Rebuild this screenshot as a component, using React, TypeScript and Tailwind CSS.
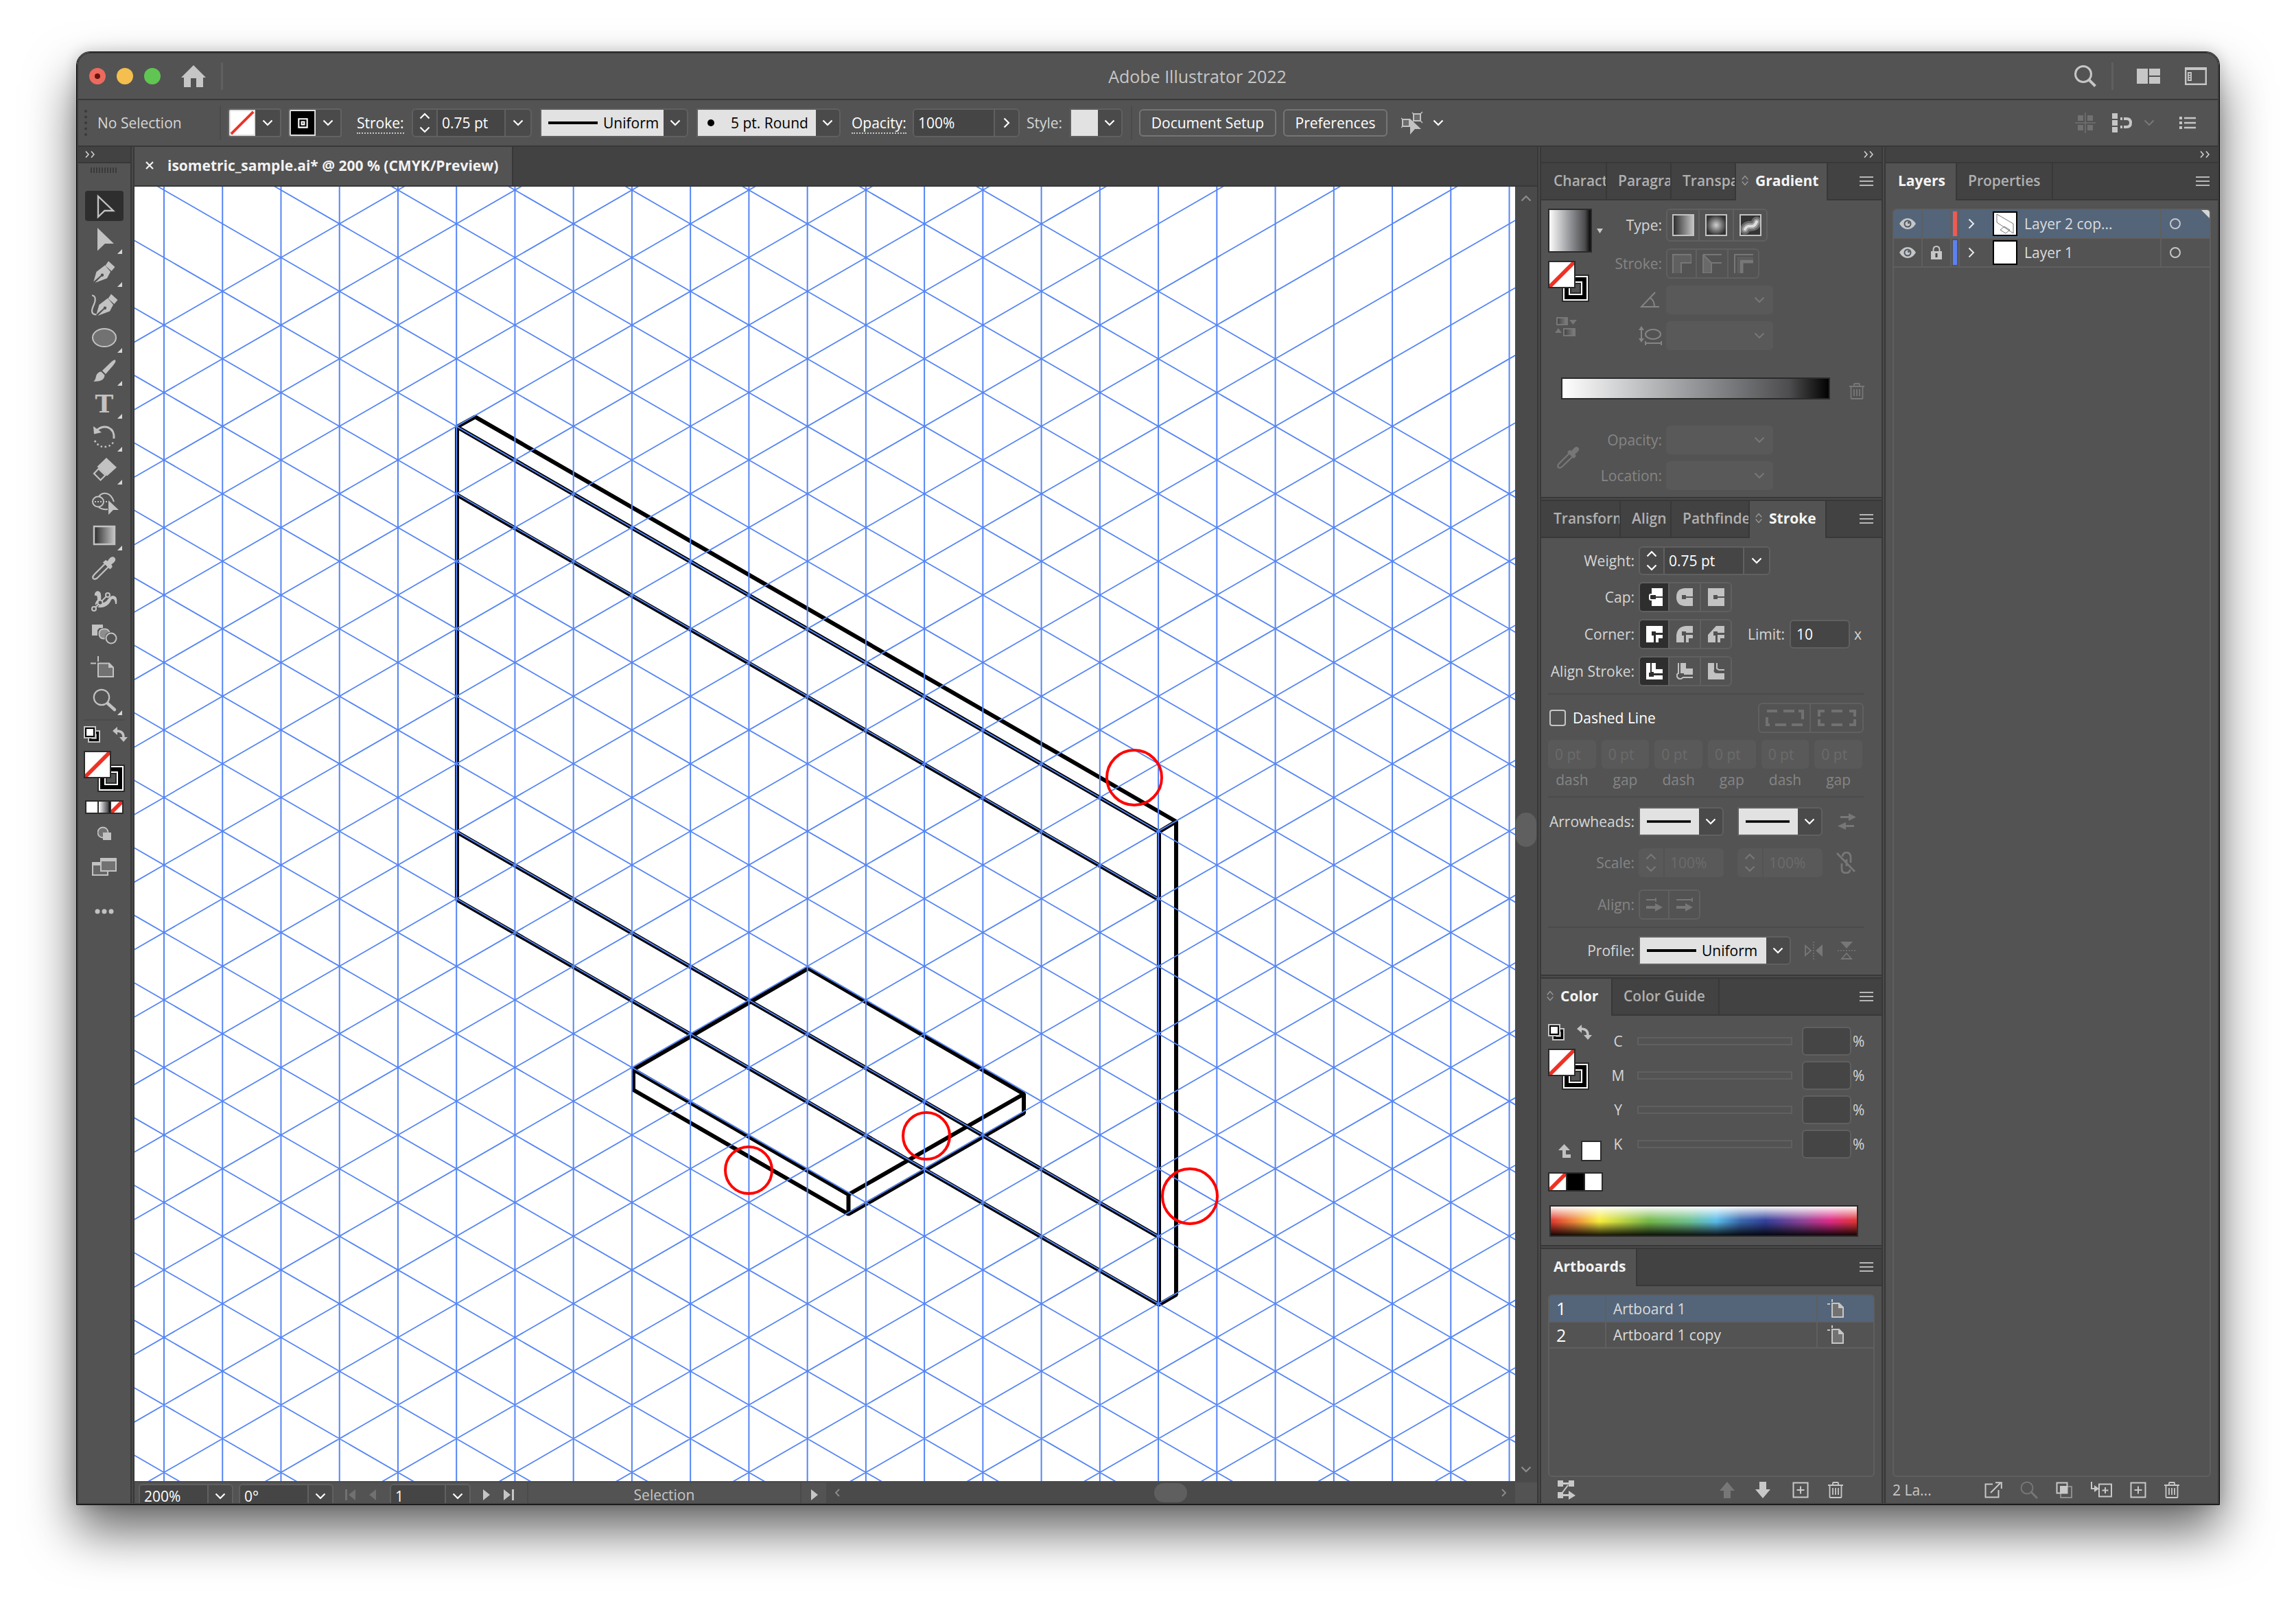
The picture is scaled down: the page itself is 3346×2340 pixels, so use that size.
import type { ReactNode } from "react";
import clsx from "clsx";

type IconProps = { className: string; box: string; children: ReactNode };

function Icon({ className, box, children }: IconProps) {
  return (
    <svg viewBox={box} className={clsx("shrink-0", className)} fill="none" aria-hidden="true">
      {children}
    </svg>
  );
}

function Chevron({ className = "text-white" }: { className?: string }) {
  return (
    <Icon box="0 0 16 10" className={clsx("h-[10px] w-4", className)}>
      <path d="M1.5 1.5 8 8l6.500-6.500" stroke="currentColor" strokeWidth="2.2" />
    </Icon>
  );
}

function ChevronUp({ className = "text-white" }: { className?: string }) {
  return (
    <Icon box="0 0 16 10" className={clsx("h-[10px] w-4", className)}>
      <path d="M1.500 8.500 8 2l6.500 6.500" stroke="currentColor" strokeWidth="2.200" />
    </Icon>
  );
}

function DoubleChevron() {
  return (
    <Icon box="0 0 14 10" className="h-[10px] w-[14px] text-[#d0d0d0]">
      <path d="m1 .5 4 4.500-4 4.500M9 .5 13 5 9 9.500" stroke="currentColor" strokeWidth="1.600" />
    </Icon>
  );
}

function MenuIcon() {
  return (
    <button type="button" aria-label="Panel menu" className="text-[#b8b8b8]">
      <Icon box="0 0 20 14" className="h-[14px] w-5">
        <path d="M0 1h20M0 7h20M0 13h20" stroke="currentColor" strokeWidth="2" />
      </Icon>
    </button>
  );
}

function TrashIcon({ className }: { className: string }) {
  return (
    <Icon box="0 0 22 24" className={clsx("h-6 w-[22px]", className)}>
      <path d="M0 5h22M7 5V2q0-1 1-1h6q1 0 1 1v3M2.500 6v16q0 1 1 1h15q1 0 1-1V6M7 9v10M11 9v10M15 9v10" stroke="currentColor" strokeWidth="1.800" />
    </Icon>
  );
}

function PlusIcon() {
  return (
    <Icon box="0 0 24 24" className="size-6 text-[#c8c8c8]">
      <path d="M1.500 1.500h21v21h-21zM12 6.500v11M6.500 12h11" stroke="currentColor" strokeWidth="2" />
    </Icon>
  );
}

function DropperIcon({ className }: { className: string }) {
  return (
    <Icon box="0 0 34 34" className={className}>
      <path d="M19 10.500 4 25.500Q1 29 3 31t6-1.500L24 15" stroke="currentColor" strokeWidth="2.200" />
      <path d="m17 9 2.500-2.500 3 1.500C26 3 29 .5 31.500 2.500s0 5.500-5 9l1.500 3-2.500 2.500Z" fill="currentColor" stroke="currentColor" strokeWidth="1.500" />
    </Icon>
  );
}

function Nib() {
  return (
    <>
      <path d="M4 35.500 8.500 20 21 10.500l8 9.500-5 9.500-17.500 6.500 8.500-8.500" fill="currentColor" />
      <path d="m26 4.500 9.500 8.500-5 6-9-8z" fill="currentColor" />
      <path d="M4.500 35.500 16 25.500" stroke="#535353" strokeWidth="2" />
      <circle cx="17" cy="24.800" r="2.200" fill="#535353" />
    </>
  );
}

/* No-fill swatch over a black stroke swatch */
function FillStroke() {
  return (
    <Icon box="0 0 60 60" className="size-[60px]">
      <path d="M20 20h40v40H20z" fill="#2b2b2b" />
      <path d="M22 22h36v36H22z" fill="#fff" />
      <path d="M24 24h32v32H24z" fill="#000" />
      <path d="M30 30h20v20H30z" fill="#fff" />
      <path d="M32 32h16v16H32z" fill="#2b2b2b" />
      <path d="M34 34h12v12H34z" fill="#535353" />
      <path d="M0 0h40v40H0z" fill="#2b2b2b" />
      <path d="M2 2h36v36H2z" fill="#fff" />
      <path d="M2 38v-4L34 2h4v4L6 38z" fill="#ee3124" />
    </Icon>
  );
}

function DefaultSwap() {
  return (
    <div className="flex justify-between">
      <button type="button" aria-label="Default fill and stroke">
        <Icon box="0 0 24 24" className="size-6">
          <path d="M6 6h18v18H6z" fill="#c6c6c6" />
          <path d="M8 8h14v14H8z" fill="#000" />
          <path d="M12 12h6v6h-6z" fill="#535353" stroke="#c6c6c6" strokeWidth="1.500" />
          <path d="M0 0h18v18H0z" fill="#c6c6c6" />
          <path d="M2 2h14v14H2z" fill="#000" />
          <path d="M4 4h10v10H4z" fill="#fff" />
        </Icon>
      </button>
      <button type="button" aria-label="Swap fill and stroke">
        <Icon box="0 0 22 22" className="size-[22px] text-[#c2c2c2]">
          <path d="M6 6q10 0 10 9" stroke="currentColor" strokeWidth="3.500" />
          <path d="M0 6 7 0v12zM16 22l-6-7h12z" fill="currentColor" />
        </Icon>
      </button>
    </div>
  );
}

function RoundSwatch({ kind }: { kind: "none" | "stroke" }) {
  return (
    <div className="flex h-[42px] overflow-hidden rounded border-2 border-[#636363]">
      <Icon box="0 0 40 40" className="h-full w-[38px]">
        <path d="M0 0h40v40H0z" fill="#e0e0e0" />
        {kind === "none" ? (
          <>
            <path d="M2 2h36v36H2z" fill="#fff" />
            <path d="M3 37 37 3" stroke="#ee3124" strokeWidth="4" />
          </>
        ) : (
          <>
            <path d="M2 2h36v36H2z" fill="#000" />
            <path d="M14 14h13v13H14zM18.500 18.500h4v4h-4z" stroke="#fff" strokeWidth="2.200" />
          </>
        )}
      </Icon>
      <button type="button" aria-label={kind === "none" ? "Fill color" : "Stroke color"} className="flex w-9 items-center justify-center bg-[#4a4a4a]">
        <Chevron />
      </button>
    </div>
  );
}

function NumberField({ id, label, value, className }: { id: string; label?: string; value: string; className: string }) {
  return (
    <div className={clsx("flex h-[42px] overflow-hidden rounded-md border-2 border-[#606060] bg-[#4a4a4a]", className)}>
      <button type="button" aria-label="Step value" className="flex w-[34px] shrink-0 flex-col items-center justify-center gap-[10px]">
        <ChevronUp />
        <Chevron />
      </button>
      <input id={id} aria-label={label} defaultValue={value} className="w-full min-w-0 border-x-2 border-[#606060] bg-[#454545] pl-[6px] text-white" />
      <button type="button" aria-label="Presets" className="flex w-9 shrink-0 items-center justify-center">
        <Chevron />
      </button>
    </div>
  );
}

function LineSelect({ id, label, text, className }: { id: string; label: string; text?: string; className: string }) {
  return (
    <div className={clsx("flex h-[42px] overflow-hidden rounded-md rounded-l-none border-2 border-[#606060] bg-[#4a4a4a]", className)}>
      <div className="flex flex-1 items-center bg-[#e2e2e2] pl-[10px] text-black">
        {text === "5 pt. Round" ? (
          <Icon box="0 0 10 10" className="mr-6 ml-1 size-[10px]">
            <circle cx="5" cy="5" r="5" fill="#000" />
          </Icon>
        ) : (
          <Icon box="0 0 72 4" className={clsx("h-1", text ? "mr-2 w-[72px]" : "w-16")}>
            <path d="M0 0h72v4H0z" fill="#000" />
          </Icon>
        )}
        <select id={id} aria-label={label} className={clsx("appearance-none bg-transparent", text ? "flex-1" : "w-2")}>
          <option>{text ?? ""}</option>
        </select>
      </div>
      <span className="flex w-[34px] shrink-0 items-center justify-center">
        <Chevron />
      </span>
    </div>
  );
}

function DisabledSelect({ id }: { id: string }) {
  return (
    <div className="relative h-[42px] w-[156px] rounded-md bg-[#595959]">
      <select id={id} disabled className="size-full appearance-none" />
      <Chevron className="pointer-events-none absolute top-4 right-3 text-[#777]" />
    </div>
  );
}

function Segments({ children }: { children: ReactNode }) {
  return <div className="flex divide-x-2 divide-[#606060] overflow-hidden rounded-md border-2 border-[#606060]">{children}</div>;
}

function Segment({ label, active, wide, children }: { label: string; active?: boolean; wide?: boolean; children: ReactNode }) {
  return (
    <button
      type="button"
      aria-label={label}
      aria-pressed={active}
      className={clsx(
        "flex h-10 items-center justify-center",
        wide ? "w-[75px]" : "w-[46px] first:w-[43px] last:w-[43px]",
        active ? "bg-[#2e2e2e] text-white" : wide ? "text-[#717171]" : "text-[#c2c2c2]",
      )}
    >
      {children}
    </button>
  );
}

type Tab = { name: string; width: string; active?: boolean; updown?: boolean };

function TabBar({ tabs }: { tabs: Tab[] }) {
  return (
    <div role="tablist" className="flex h-[54px] shrink-0 bg-[#424242]">
      {tabs.map((tab) => (
        <button
          key={tab.name}
          type="button"
          role="tab"
          aria-selected={Boolean(tab.active)}
          className={clsx(
            "flex shrink-0 items-center overflow-hidden whitespace-nowrap border-r-2 border-[#383838]",
            tab.width,
            tab.updown ? "gap-[10px] pl-2" : "pl-4 first:pl-[18px]",
            tab.active ? "bg-[#535353] pb-1 font-bold text-[#f4f4f4]" : "border-b-2 pb-[2px] font-semibold text-[#b0b0b0]",
          )}
        >
          {tab.updown ? (
            <Icon box="0 0 10 16" className="h-4 w-[10px] text-[#9a9a9a]">
              <path d="m.7 6.500 4.300-5 4.300 5M.7 9.500l4.300 5 4.300-5" stroke="currentColor" strokeWidth="1.300" />
            </Icon>
          ) : null}
          {tab.name}
        </button>
      ))}
      <div className="flex flex-1 items-center justify-end border-b-2 border-[#383838] pr-3">
        <MenuIcon />
      </div>
    </div>
  );
}

function Gutter() {
  return <div className="w-[6px] shrink-0 border-x-2 border-[#383838] bg-[#4a4a4a]" />;
}

function RowGutter() {
  return <div className="h-[6px] shrink-0 border-y-2 border-[#383838] bg-[#4a4a4a]" />;
}

function DockHeader() {
  return (
    <div className="flex h-6 shrink-0 items-center justify-end border-b-2 border-[#383838] bg-[#424242] pr-3">
      <DoubleChevron />
    </div>
  );
}

function TitleBar() {
  return (
    <header className="relative flex h-[68px] shrink-0 items-center border-b-2 border-[#383838] px-4 text-[#c6c6c6]">
      <div className="flex gap-4">
        <button type="button" aria-label="Close" className="flex size-6 items-center justify-center rounded-full bg-[#ec6a5e]">
          <span className="size-2 rounded-full bg-[#6b120c]" />
        </button>
        <button type="button" aria-label="Minimize" className="size-6 rounded-full bg-[#f4bf4f]" />
        <button type="button" aria-label="Zoom" className="size-6 rounded-full bg-[#61c554]" />
      </div>
      <button type="button" aria-label="Home" className="ml-[30px]">
        <Icon box="0 0 36 32" className="h-8 w-9">
          <path d="M18 0 36 18H32v14H22V19h-8v13H4V18H0z" fill="currentColor" />
        </Icon>
      </button>
      <div className="ml-[22px] h-10 w-[3px] bg-[#5f5f5f]" />
      <h1 className="absolute inset-x-0 pl-36 text-center text-[25px] font-medium">Adobe Illustrator 2022</h1>
      <div className="relative ml-auto flex items-center">
        <button type="button" aria-label="Search">
          <Icon box="0 0 32 32" className="size-8">
            <circle cx="13" cy="13" r="11.500" stroke="currentColor" strokeWidth="3" />
            <path d="m21 21 9.500 9.500" stroke="currentColor" strokeWidth="4" />
          </Icon>
        </button>
        <div className="ml-[22px] h-10 w-[3px] bg-[#5f5f5f]" />
        <button type="button" aria-label="Arrange documents" className="ml-[34px]">
          <Icon box="0 0 34 22" className="h-[22px] w-[34px]">
            <path d="M0 0h16v22H0zM18 0h16v10H18zM18 12h16v10H18z" fill="currentColor" />
          </Icon>
        </button>
        <button type="button" aria-label="Workspace" className="ml-9">
          <Icon box="0 0 32 26" className="h-[26px] w-8">
            <path d="M1.200 1.200h29.600v23.600H1.200z" stroke="currentColor" strokeWidth="2.400" />
            <path d="M0 0h32v4H0zM4 7h6v13H4z" fill="currentColor" />
            <path d="M7 9v2M7 12.500v2M7 16v2" stroke="#535353" strokeWidth="2.500" />
          </Icon>
        </button>
      </div>
    </header>
  );
}

function ControlBar() {
  return (
    <div className="flex h-[68px] shrink-0 items-center border-b-2 border-[#383838] pr-8 pl-[9px] text-[#d6d6d6]">
      <div className="h-[38px] border-l-4 border-dotted border-[#3a3a3a]" />
      <span className="ml-[15px] w-[178px]">No Selection</span>
      <div className="mr-[10px] h-[50px] w-[2px] bg-[#4b4b4b]" />
      <RoundSwatch kind="none" />
      <div className="w-[10px]" />
      <RoundSwatch kind="stroke" />
      <label htmlFor="stroke-weight" className="mx-2 ml-[22px] w-[72px] text-white">
        <span className="border-b-2 border-dotted border-[#c6c6c6]">Stroke:</span>
      </label>
      <NumberField id="stroke-weight" value="0.75 pt" className="w-[175px]" />
      <LineSelect id="profile" label="Width profile" text="Uniform" className="ml-3 w-[216px]" />
      <LineSelect id="brush" label="Brush" text="5 pt. Round" className="ml-3 w-[210px]" />
      <label htmlFor="opacity" className="ml-4 w-[89px] text-white">
        <span className="border-b-2 border-dotted border-[#c6c6c6]">Opacity:</span>
      </label>
      <div className="flex h-[42px] w-[156px] overflow-hidden rounded-md border-2 border-[#606060] bg-[#4a4a4a]">
        <input id="opacity" defaultValue="100%" className="w-full min-w-0 border-r-2 border-[#606060] bg-[#454545] pl-[6px] text-white" />
        <button type="button" aria-label="Opacity slider" className="flex w-[34px] shrink-0 items-center justify-center">
          <Icon box="0 0 10 16" className="h-4 w-[10px]">
            <path d="M1.500 1.500 8 8l-6.500 6.500" stroke="#fff" strokeWidth="2.200" />
          </Icon>
        </button>
      </div>
      <span className="ml-[10px] w-[63px]">Style:</span>
      <div className="flex h-[42px] w-[77px] overflow-hidden rounded-md rounded-l-none border-2 border-[#606060] bg-[#4a4a4a]">
        <span className="flex-1 bg-[#e2e2e2]" />
        <button type="button" aria-label="Graphic styles" className="flex w-[34px] items-center justify-center">
          <Chevron />
        </button>
      </div>
      <div className="mr-[10px] ml-3 h-[50px] w-[2px] bg-[#4b4b4b]" />
      <button type="button" className="h-10 w-[200px] rounded-md border-2 border-[#757575] text-white">
        Document Setup
      </button>
      <button type="button" className="ml-[10px] h-10 w-[152px] rounded-md border-2 border-[#757575] text-white">
        Preferences
      </button>
      <button type="button" aria-label="Select similar objects" className="ml-5 flex items-center gap-[14px] text-[#c2c2c2]">
        <Icon box="0 0 32 34" className="h-[34px] w-8">
          <path d="M2 12h10v10H2zM18 4h10v10H18z" stroke="currentColor" strokeWidth="2" fill="#6c6c6c" />
          <path d="m0 10 3 3M0 24l3-3M16 2l3 3M31 1l-3 3M16 16l3-3M31 17l-3-3" stroke="currentColor" strokeWidth="1.500" />
          <path d="m13 11 16 15h-9l-7 8z" fill="currentColor" />
        </Icon>
        <Chevron />
      </button>
      <div className="ml-auto flex items-center text-[#c6c6c6]">
        <Icon box="0 0 30 30" className="size-[30px] text-[#717171]">
          <path d="M4 4h8v8H4zM18 4h8v8h-8zM4 18h8v8H4zM18 18h8v8h-8z" fill="currentColor" />
          <path d="M15 0v30M0 15h30" stroke="currentColor" strokeWidth="1.500" />
        </Icon>
        <Icon box="0 0 30 28" className="ml-6 h-7 w-[30px]">
          <path d="M0 0h8v8H0zM0 10h8v8H0zM0 20h8v8H0z" fill="currentColor" />
          <path d="M17 8h4q6 0 6 6t-6 6h-4" stroke="currentColor" strokeWidth="4" />
          <path d="M12 6h3v4h-3zM12 18h3v4h-3z" fill="currentColor" />
        </Icon>
        <div className="w-4" />
        <Chevron className="text-[#777]" />
        <Icon box="0 0 24 18" className="ml-9 h-[18px] w-6">
          <path d="M7 2h17M7 9h17M7 16h17" stroke="currentColor" strokeWidth="2.400" />
          <path d="M0 0h4v4H0zM0 7h4v4H0zM0 14h4v4H0z" fill="currentColor" />
        </Icon>
      </div>
    </div>
  );
}

type Tool = { name: string; flyout?: boolean; art: ReactNode };

const tools: Tool[] = [
  { name: "Selection", art: <path d="m11 6 22 21H20.500L11 36z" stroke="currentColor" strokeWidth="2.400" /> },
  { name: "Direct selection", flyout: true, art: <path d="m10 4 24 23H21L10 37.500z" fill="currentColor" /> },
  { name: "Pen", flyout: true, art: <Nib /> },
  {
    name: "Curvature",
    art: (
      <>
        <path d="M2 6.500c6 0 5.500 8 3 13-4 8-5 15 4 15" stroke="currentColor" strokeWidth="2.200" />
        <g transform="translate(4 0)">
          <Nib />
        </g>
      </>
    ),
  },
  { name: "Ellipse", flyout: true, art: <ellipse cx="20" cy="20" rx="17" ry="13" fill="#727272" stroke="currentColor" strokeWidth="2" /> },
  {
    name: "Paintbrush",
    flyout: true,
    art: (
      <>
        <path d="M36 4.500q2 2-4 9L22 25l-5-5L30 7.500q5-4 6-3z" fill="currentColor" />
        <path d="m15.500 21.500 5 5c0 8-9 10-16.500 9 4-2 3-6 5-10q3-4 6.500-4z" fill="currentColor" />
      </>
    ),
  },
  {
    name: "Type",
    flyout: true,
    art: (
      <text x="20" y="33" textAnchor="middle" fontFamily="DejaVu Serif, serif" fontSize="36" fontWeight="700" fill="currentColor">
        T
      </text>
    ),
  },
  {
    name: "Rotate",
    flyout: true,
    art: (
      <>
        <path d="M9 11Q17 4 26 7q9 4 8 16" stroke="currentColor" strokeWidth="3" />
        <path d="m4 5 1 11.500L16 14z" fill="currentColor" />
        <path d="M6 26q6 10 16 9 8-1 12-8" stroke="currentColor" strokeWidth="2.500" strokeDasharray="2.500 3.500" />
      </>
    ),
  },
  {
    name: "Eraser",
    flyout: true,
    art: (
      <>
        <path d="m23 3 15 14-14 12.500L9.500 16z" fill="currentColor" />
        <path d="m11.500 19 10 9.500-7 7L5 26z" stroke="currentColor" strokeWidth="2.200" />
      </>
    ),
  },
  {
    name: "Shape builder",
    art: (
      <>
        <ellipse cx="11" cy="19" rx="8" ry="7.500" stroke="currentColor" strokeWidth="2" />
        <path d="M12 11.500Q16 6 23 7t11 12M12 27q5 4 13 3" stroke="currentColor" strokeWidth="2" />
        <path d="M6 19h20" stroke="currentColor" strokeWidth="2" strokeDasharray="2 2" />
        <path d="m26 17 15 14h-8l-7 7z" fill="currentColor" />
      </>
    ),
  },
  { name: "Gradient", flyout: true, art: <path d="M5 7h30v26H5z" fill="url(#tool-gradient)" stroke="currentColor" strokeWidth="2.500" /> },
  {
    name: "Eyedropper",
    art: (
      <>
        <path d="M21 13.500 5.500 29Q2 33 4 35t6-1L26 18" stroke="currentColor" strokeWidth="2.200" />
        <path d="m19 11.500 3-2.500 3 1.500C28 5 32 2.500 34.500 5s0 6-5 9l1.500 3.500-2.500 3Z" fill="currentColor" stroke="currentColor" strokeWidth="1.500" />
      </>
    ),
  },
  {
    name: "Puppet warp",
    art: (
      <>
        <path d="M6 12C5 4 14 3 15 10q1 8-1 12 7 2 12-6 6-7 11-2 2 3 1 10h-2c0-6-3-9-6-6-3 8-10 12-19 11-6-2-5-7-1-11 0-4 0-7-4-6z" fill="currentColor" />
        <path d="m6 30 18-18" stroke="#535353" strokeWidth="4.500" />
        <path d="m6 30 18-18" stroke="currentColor" strokeWidth="2" />
        <circle cx="5" cy="31" r="3" fill="#535353" stroke="currentColor" strokeWidth="2" />
        <circle cx="14" cy="22" r="3.500" fill="#535353" stroke="currentColor" strokeWidth="2" />
        <circle cx="25" cy="11" r="3" fill="#535353" stroke="currentColor" strokeWidth="2" />
      </>
    ),
  },
  {
    name: "Blend",
    art: (
      <>
        <path d="M2 6h16v5h-5l-3 3v8H2z" fill="currentColor" />
        <rect x="12.500" y="12.500" width="15" height="14" rx="6" fill="#8d8d8d" stroke="currentColor" strokeWidth="1.800" />
        <circle cx="30" cy="26" r="9.500" fill="#535353" />
        <circle cx="30" cy="26" r="7.500" stroke="currentColor" strokeWidth="2" />
      </>
    ),
  },
  {
    name: "Artboard",
    art: (
      <>
        <path d="M11 14.500h16l6 6V34H11z" fill="#727272" stroke="currentColor" strokeWidth="2" />
        <path d="M26 14v7h8z" fill="currentColor" />
        <path d="M11 4v8M0 14.500h8" stroke="currentColor" strokeWidth="2" />
      </>
    ),
  },
  {
    name: "Zoom",
    flyout: true,
    art: (
      <>
        <circle cx="16" cy="16" r="11.200" stroke="currentColor" strokeWidth="2.200" />
        <path d="m25 25 10 9" stroke="currentColor" strokeWidth="4.500" strokeLinecap="round" />
      </>
    ),
  },
];

function Toolbar() {
  return (
    <aside className="flex w-[76px] shrink-0 flex-col text-[#c2c2c2]">
      <div className="flex h-6 shrink-0 items-center border-b-2 border-[#383838] bg-[#424242] pl-[10px]">
        <DoubleChevron />
      </div>
      <Icon box="0 0 38 8" className="mt-[6px] mb-6 ml-[18px] h-2 w-[38px]">
        <path d="M0 4h38" stroke="#3a3a3a" strokeWidth="8" strokeDasharray="2 2" />
      </Icon>
      {tools.map((tool, i) => (
        <div key={tool.name} className="flex h-12 items-center justify-center">
          <button
            type="button"
            aria-label={tool.name}
            className={clsx("relative flex h-11 w-14 items-center justify-center rounded", i === 0 && "bg-[#2e2e2e]")}
          >
            <Icon box="0 0 40 40" className="size-10 overflow-visible">
              {tool.art}
            </Icon>
            {tool.flyout ? (
              <Icon box="0 0 7 7" className="absolute right-[2px] bottom-0 size-[7px]">
                <path d="M7 0v7H0z" fill="#d6d6d6" />
              </Icon>
            ) : null}
          </button>
        </div>
      ))}
      <svg className="absolute size-0" aria-hidden="true">
        <defs>
          <linearGradient id="tool-gradient">
            <stop offset="0" stopColor="#2a2a2a" />
            <stop offset="1" stopColor="#c6c6c6" />
          </linearGradient>
        </defs>
      </svg>
      <div className="mx-2 mt-1 mb-2 h-[2px] bg-[#4b4b4b]" />
      <div className="pr-1 pl-2">
        <DefaultSwap />
      </div>
      <div className="mt-3 pl-2">
        <FillStroke />
      </div>
      <Icon box="0 0 56 20" className="mt-3 ml-[10px] h-5 w-14">
        <path d="M0 0h56v20H0z" fill="#2b2b2b" />
        <path d="M2 2h16v16H2zM38 2h16v16H38z" fill="#fff" />
        <path d="M20 2h16v16H20z" fill="url(#grey-ramp)" />
        <path d="M38 18v-4L50 2h4v4L42 18z" fill="#ee3124" />
      </Icon>
      <Icon box="0 0 20 20" className="mt-[18px] ml-7 size-5">
        <circle cx="8" cy="9" r="7.500" fill="#727272" stroke="currentColor" strokeWidth="1.800" />
        <path d="M8 9h12v11H8z" fill="currentColor" />
      </Icon>
      <Icon box="0 0 36 26" className="mt-[26px] ml-5 h-[26px] w-9">
        <path d="M1 8h22v17H1z" fill="#666" stroke="currentColor" strokeWidth="2" />
        <path d="M0 6h14v5H0z" fill="currentColor" />
        <path d="M13 2h22v17H13z" fill="#727272" stroke="currentColor" strokeWidth="2" />
        <path d="M12 0h24v5H12z" fill="currentColor" />
      </Icon>
      <Icon box="0 0 28 8" className="mt-12 ml-6 h-2 w-7">
        <circle cx="4" cy="4" r="3.500" fill="currentColor" />
        <circle cx="14" cy="4" r="3.500" fill="currentColor" />
        <circle cx="24" cy="4" r="3.500" fill="currentColor" />
      </Icon>
    </aside>
  );
}

// Isometric grid: verticals every COL units, 30° lines every ROW units down a vertical
const COL = 85.24;
const ROW = 98.34;
const LEFT = 239;
const TOP = 473.6;
const SLOPE = ROW / 2 / COL;

const range = (from: number, to: number) => Array.from({ length: to - from + 1 }, (_, i) => from + i);
const lineFrom = (k: number, dir: number) => {
  const y = TOP + k * ROW;
  return `M190 ${y + dir * (190 - LEFT) * SLOPE}L2220 ${y + dir * (2220 - LEFT) * SLOPE}`;
};

const slantPath = [...range(-9, 17).map((k) => lineFrom(k, 1)), ...range(0, 29).map((k) => lineFrom(k, -1))].join("");
const columnPath = range(0, 23)
  .map((c) => `M${LEFT + c * COL} 260V2170`)
  .join("");

const marks = [
  { x: 1653, y: 1133, r: 40 },
  { x: 1350, y: 1655, r: 34 },
  { x: 1091, y: 1705, r: 34 },
  { x: 1734, y: 1743, r: 40 },
];

function Artwork() {
  return (
    <svg viewBox="196 272 2012 1886" preserveAspectRatio="xMinYMin slice" className="size-full" fill="none" role="img" aria-label="Artboard">
      <g stroke="#000" strokeWidth="6" strokeLinejoin="bevel">
        <path d="M666 622 692.500 607.300 1714 1197V1886.500L1689 1901 666 1311zL1689 1212 1714 1197M1689 1212V1901" />
        <path d="m666 721 1023 590M666 1212.500l1023 590" />
        <path d="m1178 1411 314 183v28l-255.500 147L923 1588v-29.500zM923 1558.500l313.500 182V1769M1236.500 1740.500 1492 1594" />
      </g>
      <path d={slantPath} stroke="#5585f5" strokeWidth="1.800" />
      <path d={columnPath} stroke="#5585f5" strokeWidth="2" />
      {marks.map((m) => (
        <circle key={m.x} cx={m.x} cy={m.y} r={m.r} stroke="#ff0000" strokeWidth="4" />
      ))}
    </svg>
  );
}

function StatusField({ label, value, className }: { label: string; value: string; className: string }) {
  return (
    <div className={clsx("mt-[2px] flex h-[30px] overflow-hidden rounded-t-md border-2 border-b-0 border-[#606060] bg-[#4a4a4a]", className)}>
      <input aria-label={label} defaultValue={value} className="w-full min-w-0 border-r-2 border-[#606060] bg-[#454545] pt-1 pl-[6px] text-white" />
      <button type="button" aria-label={`${label} presets`} className="flex w-[34px] shrink-0 items-center justify-center pt-1">
        <Chevron />
      </button>
    </div>
  );
}

function StatusBar() {
  return (
    <footer className="flex h-8 shrink-0 border-t-2 border-[#4a4a4a] text-[#c6c6c6]">
      <StatusField label="Zoom level" value="200%" className="ml-[6px] w-[138px]" />
      <StatusField label="Rotation" value="0°" className="ml-2 w-[138px]" />
      <Icon box="0 0 50 16" className="mt-[10px] ml-4 h-4 w-[50px] text-[#717171]">
        <path d="M1 0h3v16H1zM16 0v16L6 8zM46 0v16L36 8z" fill="currentColor" />
      </Icon>
      <StatusField label="Artboard number" value="1" className="ml-4 w-[118px]" />
      <Icon box="0 0 50 16" className="mt-[10px] ml-[18px] h-4 w-[50px]">
        <path d="M0 0v16l10-8zM30 0v16l10-8zM42 0h3v16h-3z" fill="currentColor" />
      </Icon>
      <span className="ml-[14px] w-[400px] border-x-2 border-[#4b4b4b] pt-1 text-center">Selection</span>
      <Icon box="0 0 10 16" className="mt-[10px] ml-[14px] h-4 w-[10px]">
        <path d="M0 0v16l10-8z" fill="currentColor" />
      </Icon>
      <div className="ml-3 flex flex-1 items-center justify-between bg-[#4a4a4a] px-3">
        <Icon box="0 0 8 12" className="h-3 w-2">
          <path d="M7 1 2 6l5 5" stroke="#8d8d8d" strokeWidth="1.800" />
        </Icon>
        <span className="h-7 w-12 rounded-full bg-[#5f5f5f]" />
        <Icon box="0 0 8 12" className="h-3 w-2">
          <path d="m1 1 5 5-5 5" stroke="#8d8d8d" strokeWidth="1.800" />
        </Icon>
      </div>
      <div className="w-8" />
    </footer>
  );
}

function DocumentArea() {
  return (
    <main className="flex min-w-0 flex-1 flex-col">
      <div className="flex h-[58px] shrink-0 border-b-2 border-[#383838] bg-[#424242]">
        <div className="flex w-[552px] items-center border-r-2 border-[#383838] bg-[#535353] pb-[2px] pl-4 font-bold text-[#f2f2f2]">
          <button type="button" aria-label="Close document" className="mr-5">
            <Icon box="0 0 12 12" className="size-3">
              <path d="m1 1 10 10M11 1 1 11" stroke="currentColor" strokeWidth="2.200" />
            </Icon>
          </button>
          isometric_sample.ai* @ 200 % (CMYK/Preview)
        </div>
      </div>
      <div className="flex min-h-0 flex-1">
        <div className="min-w-0 flex-1 overflow-hidden bg-white">
          <Artwork />
        </div>
        <div className="flex w-8 flex-col items-center justify-between bg-[#4a4a4a] py-3">
          <ChevronUp className="text-[#8d8d8d]" />
          <span className="mb-3 h-[50px] w-[30px] rounded-full bg-[#5f5f5f]" />
          <Chevron className="text-[#8d8d8d]" />
        </div>
      </div>
      <StatusBar />
    </main>
  );
}

function GradientRow({ label, htmlFor, dim, children }: { label: ReactNode; htmlFor?: string; dim?: boolean; children: ReactNode }) {
  return (
    <div className="flex items-center">
      <label htmlFor={htmlFor} className={clsx("mr-[6px] flex w-[82px] justify-end", dim && "text-[#858585]")}>
        {label}
      </label>
      {children}
    </div>
  );
}

function GradientPanel() {
  return (
    <section className="shrink-0 pt-3 pr-6 pb-[10px] pl-[10px]">
      <div className="flex">
        <div className="w-[84px]">
          <div className="flex items-center gap-[7px]">
            <button type="button" aria-label="Gradient preview">
              <Icon box="0 0 64 64" className="size-16">
                <defs>
                  <linearGradient id="grey-ramp">
                    <stop offset="0" stopColor="#fff" />
                    <stop offset=".5" stopColor="#939598" />
                    <stop offset=".85" stopColor="#4d4d4f" />
                    <stop offset="1" stopColor="#000" />
                  </linearGradient>
                </defs>
                <path d="M1 1h62v62H1z" fill="url(#grey-ramp)" stroke="#2b2b2b" strokeWidth="2" />
              </Icon>
            </button>
            <Icon box="0 0 9 7" className="h-[7px] w-[9px]">
              <path d="M0 0h9L4.500 7z" fill="#c6c6c6" />
            </Icon>
          </div>
          <div className="mt-3">
            <FillStroke />
          </div>
          <Icon box="0 0 32 28" className="mt-[22px] ml-[10px] h-7 w-8">
            <path d="M3 1h15v10H3z" fill="url(#tool-gradient)" fillOpacity=".4" stroke="#777" strokeWidth="2" />
            <path d="M13 17h16v10H13z" fill="url(#tool-gradient)" fillOpacity=".4" stroke="#777" strokeWidth="2" />
            <path d="M21 4h11l-5.500 7zM0 23h10L5 16z" fill="#777" />
          </Icon>
        </div>
        <div className="space-y-[10px]">
          <GradientRow label="Type:">
            <div className="flex divide-x-2 divide-[#606060] rounded-md border-2 border-[#606060]">
              {["linear", "radial", "freeform"].map((kind) => (
                <button
                  key={kind}
                  type="button"
                  aria-label={`${kind} gradient`}
                  className="flex h-11 w-[50px] items-center justify-center first:w-[47px] last:w-[47px]"
                >
                  <Icon box="0 0 32 32" className="size-8">
                    <defs>
                      <radialGradient id="radial-ramp">
                        <stop offset="0" stopColor="#d0d0d0" />
                        <stop offset="1" stopColor="#333" />
                      </radialGradient>
                    </defs>
                    <path d="M1 1h30v30H1z" fill={kind === "linear" ? "url(#tool-gradient)" : kind === "radial" ? "url(#radial-ramp)" : "#333"} />
                    {kind === "freeform" ? (
                      <>
                        <path d="M8 22c5-10 12 2 17-11" stroke="#6a6a6a" strokeWidth="15" strokeLinecap="round" />
                        <path d="M8 22c5-10 12 2 17-11" stroke="#999" strokeWidth="9" strokeLinecap="round" />
                        <path d="M8 22c5-10 12 2 17-11" stroke="#ddd" strokeWidth="4" strokeLinecap="round" />
                      </>
                    ) : null}
                    <path d="M1 1h30v30H1z" stroke="#c2c2c2" strokeWidth="2" />
                  </Icon>
                </button>
              ))}
            </div>
          </GradientRow>
          <GradientRow label="Stroke:" dim>
            <Segments>
              <Segment label="Gradient within stroke">
                <Icon box="0 0 28 28" className="size-7">
                  <path d="M1 28V1h27v12H13v15" fill="#606060" stroke="#777" strokeWidth="2" />
                </Icon>
              </Segment>
              <Segment label="Gradient along stroke">
                <Icon box="0 0 28 28" className="size-7">
                  <path d="M1 1v27h12V13z" fill="#696969" />
                  <path d="M1 1h27M1 1v27h12V13h15M1 1l12 12" stroke="#777" strokeWidth="2" />
                </Icon>
              </Segment>
              <Segment label="Gradient across stroke">
                <Icon box="0 0 28 28" className="size-7">
                  <path d="M1 28V1h27" stroke="#777" strokeWidth="2" />
                  <path d="M6 28V6h22" stroke="#606060" strokeWidth="3" />
                  <path d="M11 28V11h17" stroke="#777" strokeWidth="5" />
                </Icon>
              </Segment>
            </Segments>
          </GradientRow>
          <GradientRow
            htmlFor="gradient-angle"
            label={
              <Icon box="0 0 28 24" className="mr-1 h-6 w-7 text-[#858585]">
                <path d="M22 1 2 22h26M15 9q6 4 6 13" stroke="currentColor" strokeWidth="2" />
              </Icon>
            }
          >
            <DisabledSelect id="gradient-angle" />
          </GradientRow>
          <GradientRow
            htmlFor="gradient-ratio"
            label={
              <Icon box="0 0 34 28" className="h-7 w-[34px] text-[#858585]">
                <path d="M4 3v18" stroke="currentColor" strokeWidth="2" />
                <path d="m4 0 4 6H0zM4 24l4-6H0z" fill="currentColor" />
                <ellipse cx="21" cy="12" rx="11" ry="7" stroke="currentColor" strokeWidth="2" />
                <path d="M10 25h23M10 22v6M33 22v6" stroke="currentColor" strokeWidth="2" />
              </Icon>
            }
          >
            <DisabledSelect id="gradient-ratio" />
          </GradientRow>
        </div>
      </div>
      <div className="mt-10 flex items-center pl-[19px]">
        <Icon box="0 0 392 32" className="h-8 w-[392px]">
          <path d="M1 1h390v30H1z" fill="url(#grey-ramp)" stroke="#2b2b2b" strokeWidth="2" />
        </Icon>
        <div className="w-7" />
        <button type="button" aria-label="Delete stop" disabled className="pt-2">
          <TrashIcon className="text-[#777]" />
        </button>
      </div>
      <div className="mt-[38px] flex items-center">
        <div className="w-[54px] pl-3">
          <DropperIcon className="size-[34px] text-[#777]" />
        </div>
        <div className="space-y-[10px] pl-[6px]">
          {["Opacity", "Location"].map((name) => (
            <div key={name} className="flex items-center text-[#858585]">
              <label htmlFor={`stop-${name}`} className="mr-[6px] w-[106px] text-right">
                {name}:
              </label>
              <DisabledSelect id={`stop-${name}`} />
            </div>
          ))}
        </div>
      </div>
    </section>
  );
}

function FormRow({ label, htmlFor, dim, children }: { label: string; htmlFor?: string; dim?: boolean; children: ReactNode }) {
  return (
    <div className="flex items-center">
      <label htmlFor={htmlFor} className={clsx("mr-[6px] w-[126px] whitespace-nowrap text-right", dim && "text-[#858585]")}>
        {label}
      </label>
      {children}
    </div>
  );
}

function ScaleField({ label }: { label: string }) {
  return (
    <div className="flex h-[42px] w-[124px] overflow-hidden rounded-md bg-[#595959]">
      <span className="flex w-9 shrink-0 flex-col items-center justify-center gap-2 text-[#777]">
        <ChevronUp className="text-[#777]" />
        <Chevron className="text-[#777]" />
      </span>
      <input aria-label={label} disabled defaultValue="100%" className="w-full min-w-0 border-l-2 border-[#535353] pl-2 text-[#6b6b6b]" />
    </div>
  );
}

const capIcons = [
  <>
    <path d="M4 0h20v11H13V9H6v8h7v-2h11v11H4v-7q-4 0-4-3v-6q0-3 4-3z" fill="#2e2e2e" />
    <path d="M8 0h16v12H14v-2H8zM8 16h6v-2h10v12H8z" fill="currentColor" />
    <path d="M10 9H7q-2 0-2 2v4q0 2 2 2h3" stroke="currentColor" strokeWidth="2" />
  </>,
  <>
    <path d="M24 0v26H12Q0 25 0 13T12 0z" fill="currentColor" />
    <path d="M8 10h6v2h10v2H14v2H8z" fill="#535353" />
  </>,
  <>
    <path d="M0 0h24v26H0z" fill="currentColor" />
    <path d="M8 10h6v2h10v2H14v2H8z" fill="#535353" />
  </>,
];

const cornerShapes = ["M0 0h24v24H0z", "M24 0v24H0V14Q1 1 14 0z", "M24 0v24H0V13L12 0z"];

const alignIcons = [
  <>
    <path d="M0 0h6v14H4v6h7v-2h13v6H0z" fill="currentColor" />
    <path d="M8 0h6v9h10v6H11v-2H8z" fill="currentColor" />
  </>,
  <>
    <path d="M6 0h8v8h10v9H11v-2H6z" fill="currentColor" />
    <path d="M3 0v15q-3 1-2 5 2 4 6 3l3-2h14" stroke="currentColor" strokeWidth="2" />
  </>,
  <>
    <path d="M0 0h9v9q-2 6 5 6h10v9H0z" fill="currentColor" />
    <path d="M13 0v8l3 2h8" stroke="currentColor" strokeWidth="2" />
  </>,
];

function Divider() {
  return <div className="mt-[10px] mr-4 mb-3 h-[2px] bg-[#4b4b4b]" />;
}

function StrokePanel() {
  return (
    <section className="shrink-0 pt-3 pr-[10px] pb-[14px] pl-[10px]">
      <div className="space-y-[10px]">
        <FormRow label="Weight:" htmlFor="panel-weight">
          <NumberField id="panel-weight" value="0.75 pt" className="w-[192px]" />
        </FormRow>
        <FormRow label="Cap:">
          <Segments>
            {capIcons.map((art, i) => (
              <Segment key={i} label={["Butt cap", "Round cap", "Projecting cap"][i]} active={i === 0}>
                <Icon box="0 0 24 26" className="h-[26px] w-6">
                  {art}
                </Icon>
              </Segment>
            ))}
          </Segments>
        </FormRow>
        <FormRow label="Corner:">
          <Segments>
            {cornerShapes.map((d, i) => (
              <Segment key={d} label={["Miter join", "Round join", "Bevel join"][i]} active={i === 0}>
                <Icon box="0 0 24 24" className="size-6">
                  <path d={d} fill="currentColor" />
                  <path d="M8 8h6v2h10v3H14v11h-3V14H8z" fill={i === 0 ? "#2e2e2e" : "#535353"} />
                  <path d="M18 18h6v6h-6z" fill={i === 0 ? "#2e2e2e" : "#535353"} />
                </Icon>
              </Segment>
            ))}
          </Segments>
          <label htmlFor="miter-limit" className="ml-[23px] w-[61px]">
            Limit:
          </label>
          <input id="miter-limit" defaultValue="10" className="h-[42px] w-[88px] rounded-md border-2 border-[#606060] bg-[#454545] pl-2 text-white" />
          <span className="ml-[6px]">x</span>
        </FormRow>
        <FormRow label="Align Stroke:">
          <Segments>
            {alignIcons.map((art, i) => (
              <Segment key={i} label={["Align center", "Align inside", "Align outside"][i]} active={i === 0}>
                <Icon box="0 0 24 24" className="size-6">
                  {art}
                </Icon>
              </Segment>
            ))}
          </Segments>
        </FormRow>
      </div>
      <Divider />
      <div className="mr-4 flex items-center justify-between">
        <label className="flex items-center gap-[10px] pl-[2px] text-white">
          <input type="checkbox" className="size-6 appearance-none rounded border-2 border-[#c6c6c6]" />
          Dashed Line
        </label>
        <Segments>
          <Segment label="Preserve exact dashes" wide>
            <Icon box="0 0 56 24" className="h-6 w-14">
              <path d="M2 2h15M26 2h16M48 2h6v12M2 11v11h4M14 22h16M38 22h16" stroke="currentColor" strokeWidth="4" />
            </Icon>
          </Segment>
          <Segment label="Align dashes to corners" wide>
            <Icon box="0 0 56 24" className="h-6 w-14">
              <path d="M10 2H2v8M2 14v8h8M46 2h8v8M54 14v8h-8M20 2h16M20 22h16" stroke="currentColor" strokeWidth="4" />
            </Icon>
          </Segment>
        </Segments>
      </div>
      <div className="mt-[10px] mr-[18px] grid grid-cols-6 gap-2">
        {range(0, 5).map((i) => (
          <div key={i} className="flex flex-col items-center gap-[2px]">
            <input id={`dash-${i}`} disabled defaultValue="0 pt" className="h-[42px] w-full rounded-md bg-[#595959] pl-[10px] text-[#6b6b6b]" />
            <label htmlFor={`dash-${i}`} className="text-[#858585]">
              {i % 2 ? "gap" : "dash"}
            </label>
          </div>
        ))}
      </div>
      <Divider />
      <div className="space-y-[18px] pt-[2px]">
        <FormRow label="Arrowheads:" htmlFor="arrow-start">
          <LineSelect id="arrow-start" label="Start arrowhead" className="w-[124px]" />
          <div className="w-5" />
          <LineSelect id="arrow-end" label="End arrowhead" className="w-[124px]" />
          <Icon box="0 0 28 24" className="ml-[22px] h-6 w-7 text-[#777]">
            <path d="M4 4h12V0l11 5.500L16 11V7H4zM24 17v3H12v4L0 18.500 12 13v4z" fill="currentColor" />
          </Icon>
        </FormRow>
        <FormRow label="Scale:" dim>
          <ScaleField label="Start arrowhead scale" />
          <div className="w-5" />
          <ScaleField label="End arrowhead scale" />
          <Icon box="0 0 28 32" className="ml-5 h-8 w-7 text-[#777]">
            <path d="M9 7q1-6 6-6t6 6v9M8 17v8q0 6 6 6t6-5M15 11v10M1 2l26 27" stroke="currentColor" strokeWidth="2.800" />
          </Icon>
        </FormRow>
        <FormRow label="Align:" dim>
          <Segments>
            <Segment label="Extend arrow tip">
              <Icon box="0 0 24 20" className="h-5 w-6 text-[#777]">
                <path d="M0 3h14M14 0v6" stroke="currentColor" strokeWidth="1.800" />
                <path d="M0 12h13V8l11 6-11 6v-4H0z" fill="currentColor" />
              </Icon>
            </Segment>
            <Segment label="Place arrow tip">
              <Icon box="0 0 24 20" className="h-5 w-6 text-[#777]">
                <path d="M0 3h23M23 0v6" stroke="currentColor" strokeWidth="1.800" />
                <path d="M0 12h13V8l11 6-11 6v-4H0z" fill="currentColor" />
              </Icon>
            </Segment>
          </Segments>
        </FormRow>
      </div>
      <Divider />
      <FormRow label="Profile:" htmlFor="panel-profile">
        <LineSelect id="panel-profile" label="Profile" text="Uniform" className="w-[222px]" />
        <Icon box="0 0 26 26" className="ml-5 size-[26px] text-[#777]">
          <path d="M1 6v14l8-7z" stroke="currentColor" strokeWidth="1.800" />
          <path d="M26 4v18l-10-9z" fill="currentColor" />
          <path d="M13 0v26" stroke="currentColor" strokeWidth="1.500" strokeDasharray="2 2" />
        </Icon>
        <Icon box="0 0 26 26" className="ml-[22px] size-[26px] text-[#777]">
          <path d="M6 25h14l-7-8z" stroke="currentColor" strokeWidth="1.800" />
          <path d="M4 0h18l-9 10z" fill="currentColor" />
          <path d="M0 13h26" stroke="currentColor" strokeWidth="1.500" strokeDasharray="2 2" />
        </Icon>
      </FormRow>
    </section>
  );
}

function ColorPanel() {
  return (
    <section className="shrink-0 pt-3 pr-6 pb-3 pl-[10px]">
      <div className="flex">
        <div className="w-[92px]">
          <div className="w-16">
            <DefaultSwap />
          </div>
          <div className="mt-3">
            <FillStroke />
          </div>
          <div className="mt-[74px] flex items-center gap-[14px] pl-[14px]">
            <Icon box="0 0 18 20" className="size-5">
              <path d="M8.500 0 17 9h-6v6h7v5H6V9H0z" fill="#c2c2c2" />
            </Icon>
            <button type="button" aria-label="Last color" className="size-[30px] border-2 border-[#2b2b2b] bg-white" />
          </div>
        </div>
        <div className="space-y-2 pt-1">
          {["C", "M", "Y", "K"].map((channel) => (
            <div key={channel} className="flex h-[42px] items-center">
              <label htmlFor={`channel-${channel}`} className="w-[20px] text-center">
                {channel}
              </label>
              <input
                type="range"
                aria-label={`${channel} slider`}
                disabled
                className="ml-[18px] h-3 w-[226px] appearance-none border-2 border-[#606060] [&::-webkit-slider-thumb]:opacity-0"
              />
              <input id={`channel-${channel}`} className="ml-[14px] h-[42px] w-[72px] rounded-md border-2 border-[#606060] bg-[#454545] pl-2" />
              <span className="ml-[2px]">%</span>
            </div>
          ))}
        </div>
      </div>
      <Icon box="0 0 80 28" className="mt-4 h-7 w-20">
        <path d="M0 0h80v28H0z" fill="#2b2b2b" />
        <path d="M2 2h24v24H2zM54 2h24v24H54z" fill="#fff" />
        <path d="M28 2h24v24H28z" fill="#000" />
        <path d="M2 26v-4L22 2h4v4L6 26z" fill="#ee3124" />
      </Icon>
      <svg viewBox="0 0 450 46" className="mt-5 ml-[2px] h-[46px] w-[450px]" role="img" aria-label="Color spectrum">
        <defs>
          <linearGradient id="spectrum">
            <stop offset="0" stopColor="#e0352f" />
            <stop offset=".08" stopColor="#ef8a3c" />
            <stop offset=".16" stopColor="#f8ed3e" />
            <stop offset=".32" stopColor="#77b84a" />
            <stop offset=".45" stopColor="#6fc08e" />
            <stop offset=".54" stopColor="#5abdea" />
            <stop offset=".62" stopColor="#3a68ae" />
            <stop offset=".7" stopColor="#32409a" />
            <stop offset=".82" stopColor="#8d4397" />
            <stop offset=".91" stopColor="#dd2a87" />
            <stop offset="1" stopColor="#e0352f" />
          </linearGradient>
          <linearGradient id="spectrum-shade" x2="0" y2="1">
            <stop offset="0" stopColor="#fff" />
            <stop offset=".48" stopColor="#fff" stopOpacity="0" />
            <stop offset=".52" stopColor="#000" stopOpacity="0" />
            <stop offset="1" stopColor="#000" stopOpacity=".95" />
          </linearGradient>
        </defs>
        <path d="M1 1h448v44H1z" fill="url(#spectrum)" />
        <path d="M1 1h448v44H1z" fill="url(#spectrum-shade)" stroke="#2b2b2b" strokeWidth="2" />
      </svg>
    </section>
  );
}

function ArtboardsPanel() {
  return (
    <section className="flex min-h-0 flex-1 flex-col px-[10px] pt-3">
      <div className="flex-1 overflow-hidden rounded-md border-2 border-[#5f5f5f]">
        <table className="w-full border-collapse">
          <tbody>
            {["Artboard 1", "Artboard 1 copy"].map((name, i) => (
              <tr key={name} className={clsx("h-[38px] border-b-2 border-[#5f5f5f]", i === 0 && "bg-[#54657a]")}>
                <td className="w-[82px] border-r-2 border-[#5f5f5f] pl-[10px] text-[25px] leading-none font-medium text-white">{i + 1}</td>
                <td className="border-r-2 border-[#5f5f5f] pl-[10px] text-[#dcdcdc]">{name}</td>
                <td className="w-[82px] pl-[14px]">
                  <Icon box="0 0 24 28" className="h-7 w-6">
                    <path d="M7 6h10l6 6v14H7z" fill="#727272" stroke="#c6c6c6" strokeWidth="2" />
                    <path d="M16 5v8h8zM6 0h2v4H6zM0 6h4v2H0z" fill="#c6c6c6" />
                  </Icon>
                </td>
              </tr>
            ))}
          </tbody>
        </table>
      </div>
      <div className="flex h-[38px] shrink-0 items-center pr-[46px] pl-[14px] text-[#c8c8c8]">
        <Icon box="0 0 26 28" className="h-7 w-[26px]">
          <path d="M0 0h8v3h8V0h8v9h-8V6H8v3H0zM0 17h8v3h8v-5l10 7-10 6v-5H8v3H0z" fill="currentColor" />
          <path d="M15 7 6 19" stroke="currentColor" strokeWidth="2" />
        </Icon>
        <Icon box="0 0 22 24" className="ml-auto h-6 w-[22px] text-[#777]">
          <path d="m11 0 11 13h-6v11H6V13H0z" fill="currentColor" />
        </Icon>
        <Icon box="0 0 22 24" className="mr-8 ml-[30px] h-6 w-[22px]">
          <path d="M11 24 0 11h6V0h10v11h6z" fill="currentColor" />
        </Icon>
        <PlusIcon />
        <div className="w-7" />
        <TrashIcon className="text-[#c8c8c8]" />
      </div>
    </section>
  );
}

type Layer = { name: string; bar: string; locked?: boolean; selected?: boolean };

const layers: Layer[] = [
  { name: "Layer 2 cop...", bar: "bg-[#ee5b50]", selected: true },
  { name: "Layer 1", bar: "bg-[#5a82f5]", locked: true },
];

function LayerRow({ layer }: { layer: Layer }) {
  return (
    <li className={clsx("relative flex h-[42px] items-stretch border-b-2 border-[#5f5f5f]", layer.selected && "bg-[#54657a]")}>
      <button type="button" aria-label="Toggle visibility" className="flex w-[42px] items-center justify-center border-r-2 border-[#5f5f5f]">
        <Icon box="0 0 24 16" className="h-4 w-6">
          <path d="M0 8Q5 0 12 0t12 8q-5 8-12 8T0 8z" fill="#c6c6c6" />
          <circle cx="12" cy="8" r="5.500" fill="#4c5661" />
          <circle cx="12" cy="8" r="3.500" fill="#c6c6c6" />
          <circle cx="13.500" cy="6.500" r="1.500" fill="#4c5661" />
        </Icon>
      </button>
      <button type="button" aria-label="Toggle lock" className="flex w-[42px] items-center justify-center border-r-2 border-[#5f5f5f]">
        {layer.locked ? (
          <Icon box="0 0 16 20" className="h-5 w-4">
            <path d="M3.500 9V6q0-5 4.500-5t4.500 5v3" stroke="#c6c6c6" strokeWidth="2" />
            <path d="M0 8h16v12H0z" fill="#c6c6c6" />
            <path d="M8 11v6" stroke="#444" strokeWidth="3" />
          </Icon>
        ) : null}
      </button>
      <span className={clsx("my-[2px] ml-[2px] w-[6px]", layer.bar)} />
      <span className="ml-[2px] border-l-2 border-[#5f5f5f]" />
      <button type="button" aria-label="Expand layer" className="flex w-12 items-center pl-3">
        <Icon box="0 0 10 16" className="h-4 w-[10px]">
          <path d="M1.500 1.500 8 8l-6.500 6.500" stroke="#e8e8e8" strokeWidth="2" />
        </Icon>
      </button>
      <Icon box="0 0 36 36" className="my-[2px] size-9">
        <path d="M1 1h34v34H1z" fill="#fff" stroke="#000" strokeWidth="2" />
        {layer.selected ? <path d="M6 4v12l24 16V18L6 4M11 27l6-5 8 5-6 5z" stroke="#777" strokeWidth="1" /> : null}
      </Icon>
      <span className="ml-[10px] flex-1 self-center text-[#dcdcdc]">{layer.name}</span>
      <button type="button" aria-label="Target layer" className="flex w-[72px] items-center border-l-2 border-[#5f5f5f] pl-3">
        <span className="size-4 rounded-full border-2 border-[#c6c6c6]" />
      </button>
      {layer.selected ? (
        <Icon box="0 0 12 12" className="absolute top-0 right-0 size-3">
          <path d="M0 0h12v12z" fill="#d6d6d6" />
        </Icon>
      ) : null}
    </li>
  );
}

function LayersPanel() {
  return (
    <section className="flex min-h-0 flex-1 flex-col px-[10px] pt-3">
      <ul className="flex-1 overflow-hidden rounded-md border-2 border-[#5f5f5f]">
        {layers.map((layer) => (
          <LayerRow key={layer.name} layer={layer} />
        ))}
      </ul>
      <div className="flex h-[38px] shrink-0 items-center justify-between pr-[46px] text-[#c8c8c8]">
        <span className="w-[108px]">2 La...</span>
        <Icon box="0 0 26 24" className="h-6 w-[26px]">
          <path d="M12 3.500H1.500v19h19V12" stroke="currentColor" strokeWidth="2" />
          <path d="m9 16 14-14M16 1.200h8.800V10" stroke="currentColor" strokeWidth="2" />
        </Icon>
        <Icon box="0 0 26 26" className="size-[26px] text-[#777]">
          <circle cx="10" cy="10" r="8.500" stroke="currentColor" strokeWidth="2" />
          <path d="m16 16 9 9" stroke="currentColor" strokeWidth="3" />
        </Icon>
        <Icon box="0 0 24 24" className="size-6">
          <path d="M7 7h16v16H7z" stroke="#8d8d8d" strokeWidth="2" />
          <path d="M1.500 1.500h15v15h-15z" stroke="currentColor" strokeWidth="2" />
          <path d="M6 6h11v11H6z" fill="currentColor" />
        </Icon>
        <Icon box="0 0 32 24" className="h-6 w-8">
          <path d="M13 3.500h18v18H13zM22 8v9M17.500 12.500h9M2 0v10h6" stroke="currentColor" strokeWidth="2" />
          <path d="m6 5 7 5-7 5z" fill="currentColor" />
        </Icon>
        <PlusIcon />
        <TrashIcon className="text-[#c8c8c8]" />
      </div>
    </section>
  );
}

export default function App() {
  return (
    <div className="h-screen bg-white px-[111px] pt-[75px] pb-[147px] font-['Open_Sans','Noto_Sans',sans-serif] text-[21px] leading-7 font-medium">
      <div className="h-full rounded-t-[20px] border border-black shadow-[0_38px_72px_rgba(0,0,0,0.6),0_0_20px_rgba(0,0,0,0.16)]">
        <div className="flex h-full flex-col overflow-hidden rounded-t-[19px] border-2 border-[#3c3d3c] bg-[#535353] text-[#d6d6d6]">
          <TitleBar />
          <ControlBar />
          <div className="flex min-h-0 flex-1">
            <Toolbar />
            <Gutter />
            <DocumentArea />
            <Gutter />
            <div className="flex w-[496px] shrink-0 flex-col">
              <DockHeader />
              <TabBar
                tabs={[
                  { name: "Charact", width: "w-24" },
                  { name: "Paragra", width: "w-[94px]" },
                  { name: "Transpa", width: "w-[94px]" },
                  { name: "Gradient", width: "w-[134px]", active: true, updown: true },
                ]}
              />
              <GradientPanel />
              <RowGutter />
              <TabBar
                tabs={[
                  { name: "Transform", width: "w-[116px]" },
                  { name: "Align", width: "w-[74px]" },
                  { name: "Pathfinde", width: "w-[114px]" },
                  { name: "Stroke", width: "w-[112px]", active: true, updown: true },
                ]}
              />
              <StrokePanel />
              <RowGutter />
              <TabBar
                tabs={[
                  { name: "Color", width: "w-[104px]", active: true, updown: true },
                  { name: "Color Guide", width: "w-[156px]" },
                ]}
              />
              <ColorPanel />
              <RowGutter />
              <TabBar tabs={[{ name: "Artboards", width: "w-[140px]", active: true }]} />
              <ArtboardsPanel />
            </div>
            <Gutter />
            <div className="flex w-[484px] shrink-0 flex-col">
              <DockHeader />
              <TabBar
                tabs={[
                  { name: "Layers", width: "w-[104px]", active: true },
                  { name: "Properties", width: "w-[140px]" },
                ]}
              />
              <LayersPanel />
            </div>
          </div>
        </div>
      </div>
    </div>
  );
}
